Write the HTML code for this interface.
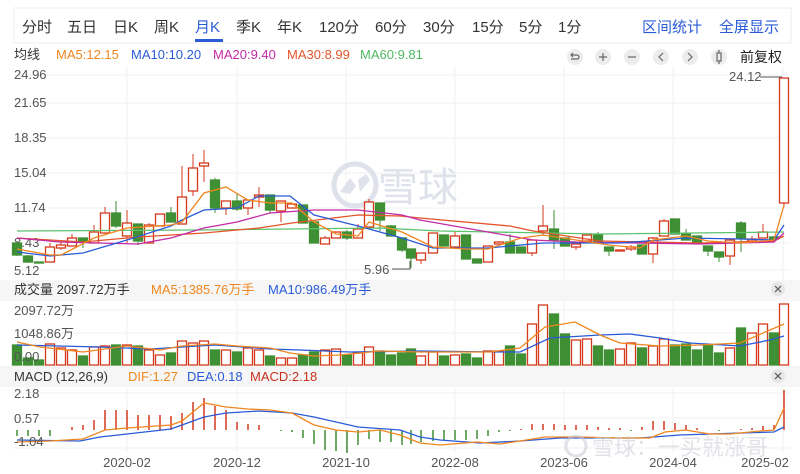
<!DOCTYPE html>
<html><head><meta charset="utf-8"><style>
body{margin:0;width:800px;height:474px;background:#fff;overflow:hidden;font-family:"Liberation Sans","Noto Sans CJK SC",sans-serif;}
svg{position:absolute;left:0;top:0}
</style></head><body>
<svg id="s" width="800" height="474" xmlns="http://www.w3.org/2000/svg" font-family="Liberation Sans, Noto Sans CJK SC, sans-serif">
<rect x="14" y="8" width="777" height="35" fill="#fff" stroke="#eee"/>
<g font-size="15" fill="#333">
<text x="22" y="32">分时</text><text x="67" y="32">五日</text><text x="113" y="32">日K</text><text x="154" y="32">周K</text>
<text x="195" y="32" fill="#2a5bd7">月K</text><text x="236" y="32">季K</text><text x="277" y="32">年K</text>
<text x="319" y="32">120分</text><text x="375" y="32">60分</text><text x="423" y="32">30分</text><text x="472" y="32">15分</text><text x="519" y="32">5分</text><text x="558" y="32">1分</text>
<text x="642" y="32" fill="#2a5bd7">区间统计</text><text x="719" y="32" fill="#2a5bd7">全屏显示</text>
</g>
<rect x="195" y="39" width="28" height="3" fill="#2a5bd7"/>
<g font-size="13">
<text x="14" y="59" fill="#333">均线</text>
<text x="56" y="59" fill="#f0861f">MA5:12.15</text>
<text x="131" y="59" fill="#2a5bd7">MA10:10.20</text>
<text x="213" y="59" fill="#c42aa6">MA20:9.40</text>
<text x="287" y="59" fill="#e4542a">MA30:8.99</text>
<text x="360" y="59" fill="#4fb862">MA60:9.81</text>
<text x="740" y="62" fill="#222" font-size="14">前复权</text>
</g>
<g fill="#ececec"><circle cx="575" cy="57" r="8"/><circle cx="603" cy="57" r="8"/><circle cx="632" cy="57" r="8"/><circle cx="661" cy="57" r="8"/><circle cx="690" cy="57" r="8"/><circle cx="719" cy="57" r="8"/></g>
<g stroke="#666" stroke-width="1.2" fill="none">
<path d="M571 55h6a2 2 0 0 1 0 4h-6M573 53l-2 2 2 2"/>
<path d="M599 57h8M603 53v8"/><path d="M628 57h8"/>
<path d="M663 53l-4 4 4 4"/><path d="M688 53l4 4-4 4"/>
<rect x="717" y="53" width="4" height="8"/><path d="M719 50v3M719 61v3"/>
</g>
<g id="grid" stroke="#f0f0f2" stroke-width="1"></g>
<g font-size="13" fill="#555" id="ylab">
<text x="14" y="79">24.96</text><text x="14" y="107">21.65</text><text x="14" y="142">18.35</text><text x="14" y="177">15.04</text><text x="14" y="212">11.74</text><text x="14" y="247">8.43</text><text x="14" y="275">5.12</text>
</g>
<g fill="#dfe2ea"><circle cx="355" cy="185" r="21" fill="none" stroke="#dfe2ea" stroke-width="5"/><path d="M340 192l10-14 6 8 -6 8z M358 180l8 -6 4 6 -10 12z"/>
<text x="378" y="201" font-size="40" fill="#dfe2ea">雪球</text></g>
<rect x="0" y="280" width="800" height="21" fill="#f6f6f6"/>
<rect x="0" y="366" width="800" height="21" fill="#f6f6f6"/>
<g font-size="13">
<text x="14" y="294" fill="#333">成交量 2097.72万手</text>
<text x="151" y="294" fill="#f0861f">MA5:1385.76万手</text>
<text x="268" y="294" fill="#2a5bd7">MA10:986.49万手</text>
<text x="14" y="381" fill="#333">MACD (12,26,9)</text>
<text x="128" y="381" fill="#f0861f">DIF:1.27</text>
<text x="187" y="381" fill="#2a5bd7">DEA:0.18</text>
<text x="250" y="381" fill="#c8321e">MACD:2.18</text>
</g>
<g fill="#e6e6e6"><circle cx="778" cy="289" r="7"/><circle cx="778" cy="376" r="7"/></g>
<g stroke="#555" stroke-width="1.2"><path d="M775 286l6 6M781 286l-6 6M775 373l6 6M781 373l-6 6"/></g>
<g id="c"></g>
<g font-size="13" fill="#555">
<text x="14" y="315">2097.72万</text><text x="14" y="338">1048.86万</text><text x="14" y="361">0.00</text>
<text x="14" y="398">2.18</text><text x="14" y="423">0.57</text><text x="14" y="446">-1.04</text>
<text x="364" y="274">5.96</text><text x="729" y="81">24.12</text>
</g>
<path d="M392 269h18v-8M760 77h22" stroke="#555" fill="none"/>
<g font-size="13" fill="#555" text-anchor="middle">
<text x="127" y="467">2020-02</text><text x="237" y="467">2020-12</text><text x="346" y="467">2021-10</text><text x="455" y="467">2022-08</text><text x="564" y="467">2023-06</text><text x="673" y="467">2024-04</text><text x="765" y="467">2025-02</text>
</g>
<g opacity="0.55" fill="#c9ccd4"><circle cx="576" cy="446" r="10" fill="none" stroke="#c9ccd4" stroke-width="3"/>
<text x="592" y="455" font-size="22">雪球：一买就涨哥</text></g>
</svg>
<script>
var NS="http://www.w3.org/2000/svg",c=document.getElementById('c'),g=document.getElementById('grid');
function el(t,a,p){var e=document.createElementNS(NS,t);for(var k in a)e.setAttribute(k,a[k]);(p||c).appendChild(e);return e;}
[75,103,138,173,208,243,270,282,310,333,365,393,418,448].forEach(function(y){el('line',{x1:14,x2:790,y1:y,y2:y},g)});
[127,237,346,455,564,673,783].forEach(function(x){el('line',{x1:x,x2:x,y1:66,y2:452},g)});
var R="#d4391c",G="#3f8f34";
var K=[[17,243,255,242,256,0],[28,256,262,255,263,0],[39,262,263,262,263,0],[50,247,262,243,262,1],[61,245,248,240,250,1],[72,238,246,234,246,1],[83,238,242,238,248,0],[94,232,243,225,243,1],[105,213,233,207,233,1],[116,213,226,201,228,0],[127,223,236,210,243,1],[138,224,241,224,245,0],[149,225,243,223,243,1],[160,214,226,214,226,1],[171,213,222,207,222,0],[182,197,224,166,224,1],[193,168,191,154,196,1],[204,163,166,150,182,1],[215,180,208,178,213,0],[226,201,208,201,215,1],[237,201,209,194,211,0],[248,200,208,200,215,1],[259,195,197,187,207,1],[270,195,210,195,213,0],[281,201,211,201,222,1],[292,204,208,204,208,1],[303,205,223,205,223,0],[314,222,243,222,243,0],[325,238,244,236,244,1],[336,232,238,232,238,1],[347,232,238,230,240,0],[358,229,238,224,238,1],[369,202,227,199,227,1],[380,203,220,203,231,0],[391,226,236,225,236,0],[402,238,250,238,252,0],[411,249,258,249,268,0],[421,253,260,253,264,1],[433,233,253,233,253,1],[444,235,246,235,246,0],[455,236,247,232,249,1],[466,235,259,235,259,0],[477,259,263,259,263,0],[488,246,262,246,262,1],[499,242,244,242,244,1],[510,242,253,234,253,0],[521,247,253,247,253,0],[532,240,253,240,256,1],[543,226,231,205,236,1],[554,229,240,210,249,0],[565,238,246,238,246,0],[576,244,247,244,250,1],[587,235,241,235,241,1],[598,235,243,232,243,0],[609,247,251,247,256,0],[620,250,251,250,251,1],[631,247,249,245,251,1],[642,245,254,245,254,0],[653,238,254,237,263,1],[664,221,236,219,236,1],[675,219,234,219,234,0],[686,234,240,229,240,0],[697,236,243,236,243,0],[708,246,251,246,256,0],[719,252,257,252,262,0],[730,240,256,238,265,1],[741,223,238,221,252,0],[752,239,241,236,243,1],[763,232,238,224,238,1],[774,237,239,236,240,0],[784,78,203,78,207,1]];
K.forEach(function(k){var col=k[5]?R:G;el('line',{x1:k[0],x2:k[0],y1:k[3],y2:k[4],stroke:col});
el('rect',{x:k[0]-4.5,y:k[1],width:9,height:Math.max(1,k[2]-k[1]),fill:k[5]?'#fff':col,stroke:col,'stroke-width':1.3});});
function pl(p,col){el('polyline',{points:p.map(function(a){return a.join(',')}).join(' '),fill:'none',stroke:col,'stroke-width':1.3});}
pl([[17,231],[200,230],[380,228],[440,231],[600,234],[784,232]],"#5cc26e");
pl([[17,238],[83,242],[138,237],[204,233],[259,228],[292,223],[358,215],[400,216],[420,218],[510,226],[533,231],[600,241],[700,243],[774,241],[784,236]],"#e4542a");
pl([[17,238],[60,242],[138,244],[171,238],[204,228],[237,222],[270,213],[314,210],[358,210],[402,215],[420,220],[488,232],[533,240],[576,242],[700,244],[774,242],[784,233]],"#c42aa6");
pl([[17,252],[50,256],[83,253],[127,240],[171,226],[182,220],[204,210],[237,208],[259,196],[290,196],[314,215],[358,226],[402,238],[433,248],[488,248],[543,243],[620,243],[686,238],[741,239],[774,240],[784,225]],"#2a5bd7");
pl([[17,249],[50,255],[61,255],[94,238],[127,228],[171,225],[182,222],[204,193],[226,187],[248,200],[270,203],[292,203],[314,222],[336,234],[358,236],[369,222],[402,232],[433,247],[466,249],[488,249],[521,238],[543,235],[576,240],[609,245],[640,248],[653,240],[686,236],[708,241],[741,243],[774,240],[784,205]],"#f0861f");
var V=[345,358,360,344,348,350,356,347,346,345,345,346,350,355,353,341,343,341,350,350,352,348,350,356,358,358,355,352,350,349,355,353,347,351,355,353,349,356,352,356,355,354,358,351,351,346,354,324,305,314,334,340,339,346,350,349,343,348,346,339,345,344,350,345,353,348,328,333,324,333,304];
K.forEach(function(k,i){var t=V[i]||350,col=k[5]?R:G;el('rect',{x:k[0]-4.5,y:t,width:9,height:365-t,fill:k[5]?'#fff':col,stroke:col,'stroke-width':1.3});});
pl([[17,345],[100,347],[150,349],[215,345],[270,349],[300,350],[350,352],[420,351],[500,352],[520,352],[550,338],[600,335],[630,334],[660,338],[690,343],[740,346],[770,340],[784,336]],"#2a5bd7");
pl([[17,342],[40,347],[83,352],[127,346],[160,350],[182,346],[215,344],[237,346],[270,348],[290,353],[314,356],[340,355],[380,351],[420,352],[490,352],[520,348],[545,327],[575,322],[600,335],[620,343],[660,346],[700,345],[740,343],[770,330],[784,324]],"#f0861f");
var H=[6,6,6,6,0,-3,-5,-10,-20,-20,-20,-15,-15,-15,-14,-17,-28,-32,-24,-20,-8,-6,-5,0,1,2,8,14,20,21,23,15,9,12,12,15,14,12,11,10,10,10,9,6,2,1,-1,-6,-6,-6,-5,-5,-5,-3,-2,-2,1,-3,-9,-9,-7,-5,-2,0,1,0,-1,-2,-4,-5,-40];
K.forEach(function(k,i){var h=H[i];if(!h)return;el('line',{x1:k[0],x2:k[0],y1:430,y2:430+h,stroke:h<0?R:G,'stroke-width':1.5});});
pl([[17,440],[80,441],[100,437],[127,434],[171,429],[182,425],[204,417],[226,413],[259,411],[292,413],[314,417],[358,427],[400,430],[420,437],[440,440],[480,443],[520,441],[560,438],[640,438],[680,435],[740,433],[774,432],[784,427]],"#2a5bd7");
pl([[17,442],[50,441],[83,439],[105,430],[127,428],[171,425],[182,421],[193,412],[204,403],[226,407],[248,409],[270,410],[292,413],[314,425],[336,430],[358,432],[380,430],[400,435],[420,443],[440,445],[477,442],[500,444],[520,441],[545,437],[580,437],[620,438],[650,438],[665,432],[685,430],[710,434],[730,434],[760,431],[774,430],[784,408]],"#f0861f");
</script>
</body></html>
